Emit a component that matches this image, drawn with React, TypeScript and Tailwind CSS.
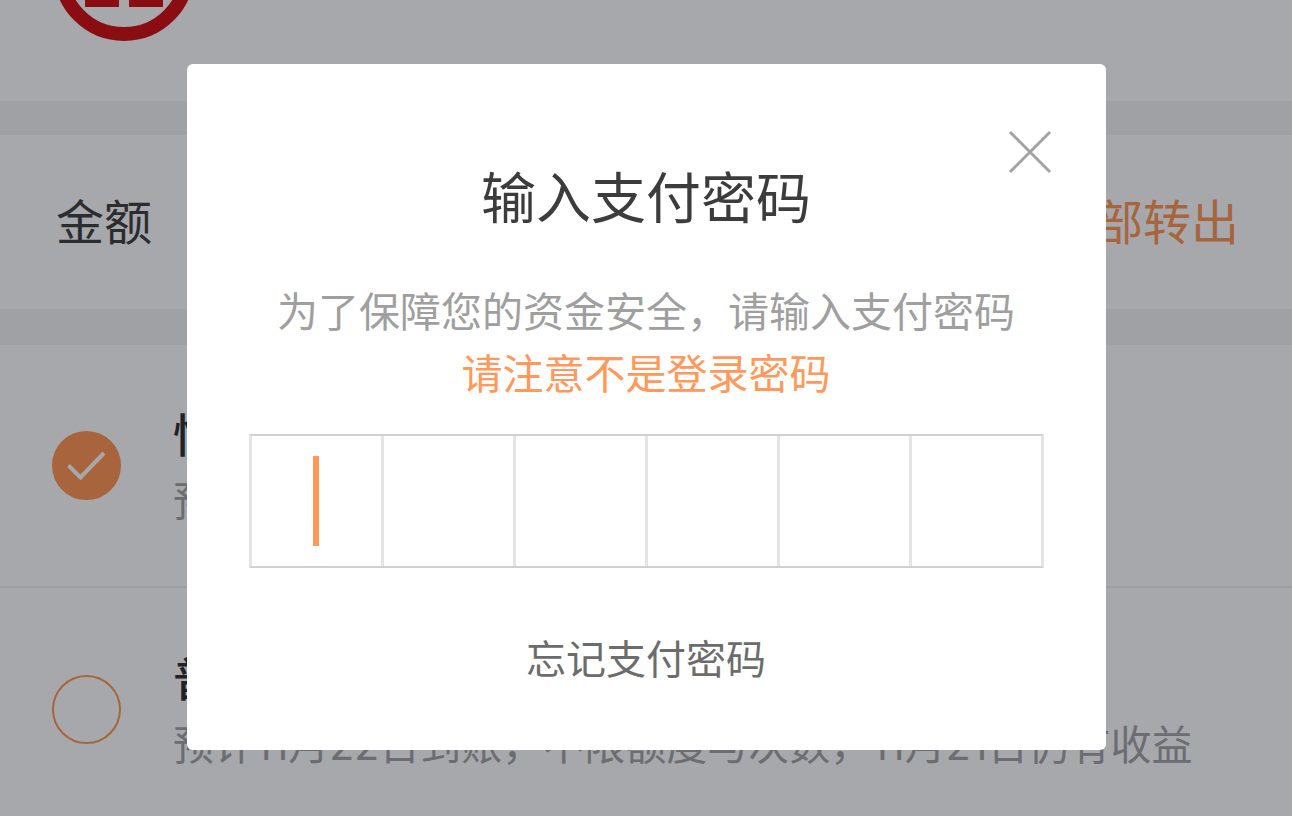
import { useState } from 'react';

const ARRIVAL_OPTIONS = [
  {
    id: 'fast',
    title: '快速到账',
    note: '预计2小时内到账',
  },
  {
    id: 'normal',
    title: '普通到账',
    note: '预计11月22日到账，不限额度与次数，11月21日仍有收益',
  },
];

const PIN_LENGTH = 6;

export default function App() {
  const [arrival, setArrival] = useState('fast');

  return (
    <div className="h-screen overflow-hidden bg-[#f4f4f4] font-['Inter','Noto_Sans_CJK_SC',sans-serif]">
      {/* Transfer page */}
      <main>
        <header className="h-[101px] bg-white pl-[53px]">
          <BankLogo />
        </header>

        <section className="mt-[34px] flex h-[174px] items-center bg-white pt-[2px] pr-[53px] pl-[56px] text-[48px]">
          <label htmlFor="amount" className="shrink-0 text-[#444]">
            金额
          </label>
          <input id="amount" type="text" inputMode="decimal" className="ml-10 min-w-0 flex-1 outline-none" />
          <button type="button" className="shrink-0 text-[#ff9858]">
            全部转出
          </button>
        </section>

        <section className="mt-[36px] divide-y-2 divide-[#f0f0f0] bg-white">
          {ARRIVAL_OPTIONS.map((option) => (
            <ArrivalOption
              key={option.id}
              {...option}
              checked={arrival === option.id}
              onSelect={() => setArrival(option.id)}
            />
          ))}
        </section>
      </main>

      <PasswordDialog />
    </div>
  );
}

function ArrivalOption({ id, title, note, checked, onSelect }: {
  id: string;
  title: string;
  note: string;
  checked: boolean;
  onSelect: () => void;
}) {
  return (
    <label className="flex h-[243px] items-center gap-[52px] pl-[52px]">
      <span className="relative size-[69px] shrink-0">
        <input
          type="radio"
          name="arrival"
          value={id}
          checked={checked}
          onChange={onSelect}
          className="peer block size-full appearance-none rounded-full border-2 border-[#ff9858] checked:bg-[#ff9858]"
        />
        <svg
          viewBox="0 0 69 69"
          fill="none"
          className="pointer-events-none absolute inset-0 hidden size-full peer-checked:block"
        >
          <path d="M16.5 34.5 28.5 46.5 52 22" stroke="#fff" strokeWidth="4" />
        </svg>
      </span>
      <span className="pt-1 whitespace-nowrap">
        <span className="block text-[46px] leading-[66px] font-medium text-[#333]">{title}</span>
        <span className="block text-[41px] leading-[66px] text-[#a6a6a6]">{note}</span>
      </span>
    </label>
  );
}

function PasswordDialog() {
  return (
    <div className="fixed inset-0 flex items-start justify-center bg-[rgb(0,3,12)]/[0.345] pt-16">
      <div
        role="dialog"
        aria-modal="true"
        aria-labelledby="dialog-title"
        className="relative w-full max-w-[919px] rounded-md bg-white px-[62px] pt-[101px] pb-[60px] text-center"
      >
        <button type="button" aria-label="关闭" className="absolute top-[66px] right-[54px]">
          <svg viewBox="0 0 44 44" fill="none" className="size-11">
            <path d="M2 2 42 42M42 2 2 42" stroke="#a3a3a3" strokeWidth="3" />
          </svg>
        </button>

        <h2 id="dialog-title" className="text-[55px] leading-[66px] text-[#3c3c3c]">
          输入支付密码
        </h2>
        <p className="mt-[50px] text-[41px] leading-[62px] text-[#9f9f9f]">为了保障您的资金安全，请输入支付密码</p>
        <p className="text-[41px] leading-[62px] text-[#ff9858]">请注意不是登录密码</p>

        {/* PIN boxes */}
        <div className="mt-[29px] flex h-[134px] divide-x-3 divide-[#e4e4e4] border-x-3 border-y-2 border-x-[#e4e4e4] border-y-[#d0d0d0]">
          {Array.from({ length: PIN_LENGTH }, (_, i) => (
            <div key={i} className="relative flex-1">
              <input
                type="password"
                inputMode="numeric"
                maxLength={1}
                aria-label={`支付密码第${i + 1}位`}
                className="size-full text-center text-[55px] caret-transparent outline-none"
              />
              {i === 0 && (
                <span className="pointer-events-none absolute inset-0 m-auto h-[90px] w-[6px] bg-[#ff9858]" />
              )}
            </div>
          ))}
        </div>

        <a href="#forgot" className="mt-[62px] block text-[40px] leading-[60px] text-[#6c6c6c]">
          忘记支付密码
        </a>
      </div>
    </div>
  );
}

function BankLogo() {
  return (
    <svg viewBox="0 0 142 41" className="h-[41px] w-[142px]" aria-hidden="true">
      <circle cx="71" cy="-29.5" r="63.5" fill="none" stroke="#d31414" strokeWidth="14" />
      <path d="M32 0H66V7H32ZM76 0H110V7H76Z" fill="#d31414" />
    </svg>
  );
}
